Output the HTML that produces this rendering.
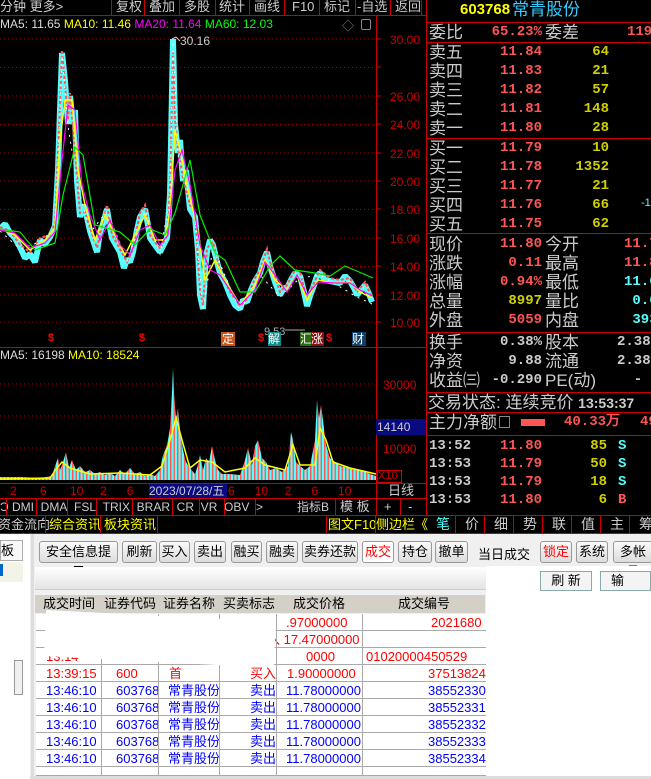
<!DOCTYPE html>
<html><head><meta charset="utf-8"><style>
*{margin:0;padding:0;box-sizing:border-box}
body{width:651px;height:779px;background:#000;position:relative;overflow:hidden;font-family:"Liberation Sans","WenQuanYi Zen Hei","Noto Sans CJK SC",sans-serif;}
.a{position:absolute;white-space:nowrap}
.rl{position:absolute;background:#c00}
.t{font-size:13px;color:#ccc;line-height:16px}
.lb{font-size:17px;color:#ccc;line-height:19px}
.n{font-size:14px;font-weight:bold;line-height:19px;text-align:right;font-family:"Liberation Mono","WenQuanYi Zen Hei",monospace}
.r{color:#ff5555}.y{color:#d0d000}.c{color:#55ffff}.w{color:#ccc}
.btn{position:absolute;top:541px;height:22px;border:1px solid #999;border-radius:3px;background:linear-gradient(#fafafa,#dcdcdc);font-size:13px;line-height:20px;text-align:center;color:#000}
.row{position:absolute;left:36px;width:450px;height:17px;border-bottom:1px solid #aaa;font-size:13px;line-height:17px;background:#fff}
.row span{position:absolute;top:0}
</style></head><body>
<div class="a t" style="left:0;top:-1px;color:#ccc">分钟 更多&gt;</div>
<div class="rl" style="left:0;top:15px;width:426px;height:1px"></div>
<div class="rl" style="left:111px;top:0;width:1px;height:15px"></div>
<div class="rl" style="left:144px;top:0;width:1px;height:15px"></div>
<div class="rl" style="left:179px;top:0;width:1px;height:15px"></div>
<div class="rl" style="left:215px;top:0;width:1px;height:15px"></div>
<div class="rl" style="left:249px;top:0;width:1px;height:15px"></div>
<div class="rl" style="left:284px;top:0;width:1px;height:15px"></div>
<div class="rl" style="left:319px;top:0;width:1px;height:15px"></div>
<div class="rl" style="left:355px;top:0;width:1px;height:15px"></div>
<div class="rl" style="left:390px;top:0;width:1px;height:15px"></div>
<div class="rl" style="left:421px;top:0;width:1px;height:15px"></div>
<div class="a t" style="left:116px;top:-1px">复权</div>
<div class="a t" style="left:149px;top:-1px">叠加</div>
<div class="a t" style="left:184px;top:-1px">多股</div>
<div class="a t" style="left:219px;top:-1px">统计</div>
<div class="a t" style="left:254px;top:-1px">画线</div>
<div class="a t" style="left:292px;top:-1px">F10</div>
<div class="a t" style="left:324px;top:-1px">标记</div>
<div class="a t" style="left:357px;top:-1px">-自选</div>
<div class="a t" style="left:395px;top:-1px">返回</div>
<div class="a" style="left:0;top:16px;font-size:12px;line-height:16px"><span style="color:#ddd">MA5: 11.65 </span><span style="color:#ff0">MA10: 11.46 </span><span style="color:#f0f">MA20: 11.64 </span><span style="color:#0f0">MA60: 12.03</span></div>
<div class="a" style="left:342px;top:17px;color:#888;font-size:12px">◇</div>
<div class="a" style="left:361px;top:19px;width:10px;height:11px;border:1px solid #888;border-radius:2px"></div>
<div class="rl" style="left:376px;top:16px;width:1px;height:482px"></div>
<div class="rl" style="left:426px;top:0;width:1px;height:516px"></div>
<div class="rl" style="left:0;top:347px;width:426px;height:1px"></div>
<svg class="a" style="left:0;top:16px" width="426" height="470" viewBox="0 16 426 470">
<defs>
<pattern id="vp" width="7" height="10" patternUnits="userSpaceOnUse">
<rect x="0" y="0" width="2" height="10" fill="#55ffff"/><rect x="2" y="0" width="1.5" height="10" fill="#ff5555"/><rect x="3.5" y="0" width="2" height="10" fill="#55ffff"/><rect x="5.5" y="0" width="1.5" height="10" fill="#ff6060"/>
</pattern>
</defs>
<g stroke="#a00" stroke-dasharray="1,3" stroke-width="1">
<line x1="0" y1="39" x2="376" y2="39"/><line x1="0" y1="67.5" x2="376" y2="67.5"/><line x1="0" y1="96" x2="376" y2="96"/><line x1="0" y1="124.5" x2="376" y2="124.5"/><line x1="0" y1="153" x2="376" y2="153"/><line x1="0" y1="181" x2="376" y2="181"/><line x1="0" y1="209.5" x2="376" y2="209.5"/><line x1="0" y1="238" x2="376" y2="238"/><line x1="0" y1="266.5" x2="376" y2="266.5"/><line x1="0" y1="295" x2="376" y2="295"/><line x1="0" y1="322" x2="376" y2="322"/>
<line x1="0" y1="384" x2="376" y2="384"/><line x1="0" y1="416" x2="376" y2="416"/><line x1="0" y1="448" x2="376" y2="448"/>
</g>
<g stroke="#c00"><line x1="376" y1="39" x2="381" y2="39"/><line x1="376" y1="67" x2="381" y2="67"/><line x1="376" y1="96" x2="381" y2="96"/><line x1="376" y1="124" x2="381" y2="124"/><line x1="376" y1="153" x2="381" y2="153"/><line x1="376" y1="181" x2="381" y2="181"/><line x1="376" y1="209" x2="381" y2="209"/><line x1="376" y1="238" x2="381" y2="238"/><line x1="376" y1="266" x2="381" y2="266"/><line x1="376" y1="295" x2="381" y2="295"/><line x1="376" y1="322" x2="381" y2="322"/></g>
<g fill="#c00" font-size="12" font-family="Liberation Sans">
<text x="390" y="44">30.00</text><text x="390" y="101">26.00</text><text x="390" y="129">24.00</text><text x="390" y="158">22.00</text><text x="390" y="186">20.00</text><text x="390" y="214">18.00</text><text x="390" y="243">16.00</text><text x="390" y="271">14.00</text><text x="390" y="300">12.00</text><text x="390" y="327">10.00</text>
<text x="383" y="389">30000</text><text x="383" y="453">10000</text>
</g>
<polyline fill="none" stroke="#55ffff" stroke-width="6" stroke-linejoin="bevel" points="0,229 5,224 10,233 15,238 20,247 25,258 30,254 35,262 40,240 45,244 50,237 55,226 58,170 60,110 62,53 65,81 68,124 70,96 73,124 75,110 77,181 80,217 83,205 85,209 88,222 90,231 93,240 97,252 100,232 103,224 107,209 110,228 112,238 116,245 120,252 124,268 127,259 130,262 133,252 137,230 140,217 145,209 148,225 150,238 155,245 160,252 164,244 167,238 170,195 173,39 175,124 178,153 180,140 183,181 186,170 190,209 195,217 198,250 200,295 203,309 205,270 207,252 210,240 213,245 217,262 220,273 225,282 230,295 235,305 240,309 243,300 247,302 251,290 255,281 260,273 263,262 267,252 270,266 275,282 280,295 284,288 287,288 291,280 295,273 300,276 304,292 307,306 310,296 313,288 317,276 320,273 325,280 330,281 335,282 340,283 345,276 350,281 354,288 357,295 361,290 365,285 369,294 372,302"/>
<polyline fill="none" stroke="#ff5555" stroke-width="2" stroke-dasharray="3,2" points="0,227 10,231 20,245 30,252 40,238 50,235 55,223 60,105 62,50 65,84 68,120 70,93 73,128 77,178 80,213 85,212 90,228 97,248 103,221 107,205 112,235 120,249 127,262 133,249 140,213 145,205 150,235 160,249 167,235 170,190 173,50 175,120 178,150 183,178 190,205 195,213 200,290 203,305 207,248 213,242 220,270 230,292 240,306 247,299 255,278 260,270 267,249 270,262 280,292 287,285 295,270 300,272 307,300 313,285 320,270 330,278 340,280 350,278 357,292 365,282 372,298"/>
<polyline fill="none" stroke="#ffffff" stroke-width="1" stroke-dasharray="2,5" points="0,231 20,249 40,242 55,228 60,112 62,55 68,126 77,183 90,233 107,211 127,261 145,211 160,254 170,197 173,41 178,155 195,219 203,311 213,247 240,311 260,275 280,297 300,278 320,275 357,297 372,304"/>
<polyline fill="none" stroke="#ffff00" stroke-width="1.5" points="0,229 15,235 30,250 45,240 55,228 60,140 65,100 72,100 78,170 85,205 95,240 105,215 115,235 125,255 135,235 145,215 155,240 165,240 170,210 175,130 180,150 188,190 198,230 205,280 215,260 225,280 240,305 255,285 265,260 275,280 287,290 297,275 307,300 318,280 335,283 350,282 360,292 372,298"/>
<polyline fill="none" stroke="#ff00ff" stroke-width="1.2" points="0,230 15,233 30,248 45,243 55,232 62,160 68,105 75,110 82,185 90,215 100,240 110,220 120,245 130,255 140,230 150,225 160,245 168,235 175,170 182,150 190,185 200,245 210,270 220,275 240,305 255,290 265,262 275,275 287,292 297,275 307,295 318,282 335,283 350,283 360,290 373,296"/>
<polyline fill="none" stroke="#00ee00" stroke-width="1.2" points="0,229 20,232 35,250 55,243 63,195 75,147 83,155 95,225 110,229 120,232 135,245 150,229 165,235 175,213 190,160 200,215 215,253 225,260 240,292 255,292 270,266 280,256 295,270 315,273 330,276 345,266 373,278"/>
<text x="180" y="45" fill="#ccc" font-size="12" font-family="Liberation Sans">30.16</text>
<polyline fill="none" stroke="#ccc" points="172,39 176,37 180,41"/>
<text x="264" y="335" fill="#aaa" font-size="11" font-family="Liberation Sans">9.53</text>
<line x1="285" y1="330" x2="305" y2="330" stroke="#aaa"/>
<polygon fill="url(#vp)" points="0,477 20,477 40,478 52,476 55,466 58,458 60,470 63,462 66,452 69,468 72,460 76,470 80,466 85,472 90,470 95,474 100,472 105,475 110,473 115,476 120,470 125,474 130,468 135,474 140,472 145,476 150,474 155,476 160,470 163,455 166,448 168,440 170,428 172,392 173,368 174,392 176,420 178,408 180,430 183,450 186,462 190,468 195,474 198,465 200,455 203,470 206,458 209,462 212,446 215,460 218,470 222,474 230,474 240,475 245,460 248,448 252,465 255,446 258,440 262,458 266,462 270,470 276,468 282,472 288,466 291,432 293,440 296,462 300,466 305,470 310,466 315,440 317,400 319,418 321,405 323,420 326,445 330,458 335,462 340,466 350,468 360,470 370,474 376,476 376,480 0,480"/>
<polyline fill="none" stroke="#ffff00" stroke-width="1.5" points="0,479 50,478 57,468 62,462 70,468 90,474 120,473 150,475 162,466 170,440 176,418 182,440 190,468 200,460 212,462 225,472 245,468 255,458 265,465 285,470 293,445 300,465 315,465 320,428 326,440 333,462 350,468 376,474"/>
</svg>
<div class="a" style="left:48px;top:332px;color:#f00;font-size:11px;font-weight:bold">$</div>
<div class="a" style="left:139px;top:332px;color:#f00;font-size:11px;font-weight:bold">$</div>
<div class="a" style="left:221px;top:332px;width:14px;height:14px;background:#c8561c;color:#fff;font-size:12px;line-height:14px;text-align:center">定</div>
<div class="a" style="left:258px;top:332px;color:#f00;font-size:11px;font-weight:bold">$</div>
<div class="a" style="left:268px;top:332px;width:13px;height:14px;background:#128a8a;color:#fff;font-size:12px;line-height:14px">解</div>
<div class="a" style="left:300px;top:332px;width:12px;height:14px;background:#2a6a10;color:#fff;font-size:12px;line-height:14px">汇</div>
<div class="a" style="left:311px;top:332px;width:13px;height:14px;background:#8a1010;color:#fff;font-size:12px;line-height:14px">涨</div>
<div class="a" style="left:326px;top:332px;color:#f00;font-size:11px;font-weight:bold">$</div>
<div class="a" style="left:352px;top:332px;width:14px;height:14px;background:#10406a;color:#fff;font-size:12px;line-height:14px">财</div>
<div class="a" style="left:0;top:348px;font-size:12px;line-height:15px"><span style="color:#ddd">MA5: 16198 </span><span style="color:#ff0">MA10: 18524</span></div>
<div class="a" style="left:376px;top:419px;width:50px;height:16px;background:#0a0a80;color:#ccc;font-size:12px;line-height:16px;padding-left:1px">14140</div>
<div class="a" style="left:377px;top:470px;width:25px;height:13px;border:1px solid #c00;color:#c00;font-size:11px;line-height:11px">X10</div>
<div class="rl" style="left:0;top:483px;width:426px;height:1px"></div>
<div class="rl" style="left:0;top:498px;width:426px;height:1px"></div>
<div class="rl" style="left:0;top:515px;width:651px;height:1px"></div>
<div class="rl" style="left:0;top:533px;width:651px;height:1px"></div>
<div class="a" style="left:0;top:484px;font-size:12px;line-height:14px;color:#c00">&nbsp;&nbsp;&nbsp;2&nbsp;&nbsp;&nbsp;&nbsp;&nbsp;&nbsp;&nbsp;6&nbsp;&nbsp;&nbsp;&nbsp;&nbsp;&nbsp;&nbsp;10&nbsp;&nbsp;&nbsp;&nbsp;&nbsp;2&nbsp;&nbsp;&nbsp;&nbsp;&nbsp;&nbsp;6</div>
<div class="a" style="left:149px;top:484px;width:78px;height:14px;background:#0a0a80;color:#ccc;font-size:12px;line-height:14px">2023/07/28/五</div>
<div class="a" style="left:228px;top:484px;font-size:12px;line-height:14px;color:#c00">6&nbsp;&nbsp;&nbsp;&nbsp;&nbsp;&nbsp;10&nbsp;&nbsp;&nbsp;&nbsp;&nbsp;2&nbsp;&nbsp;&nbsp;&nbsp;&nbsp;&nbsp;6&nbsp;&nbsp;&nbsp;&nbsp;&nbsp;&nbsp;10</div>
<div class="a t" style="left:388px;top:483px">日线</div>
<div class="a t" style="left:0;top:499px;color:#ccc;font-size:12px">Ͻ&nbsp;DMI&nbsp;&nbsp;DMA&nbsp;&nbsp;FSL&nbsp;&nbsp;TRIX&nbsp;&nbsp;BRAR&nbsp;&nbsp;CR&nbsp;&nbsp;VR&nbsp;&nbsp;OBV&nbsp;&nbsp;&gt;</div>
<div class="rl" style="left:6px;top:499px;width:1px;height:16px"></div><div class="rl" style="left:36px;top:499px;width:1px;height:16px"></div><div class="rl" style="left:67px;top:499px;width:1px;height:16px"></div><div class="rl" style="left:96px;top:499px;width:1px;height:16px"></div><div class="rl" style="left:132px;top:499px;width:1px;height:16px"></div><div class="rl" style="left:172px;top:499px;width:1px;height:16px"></div><div class="rl" style="left:199px;top:499px;width:1px;height:16px"></div><div class="rl" style="left:224px;top:499px;width:1px;height:16px"></div><div class="rl" style="left:255px;top:499px;width:1px;height:16px"></div><div class="rl" style="left:335px;top:499px;width:1px;height:16px"></div><div class="rl" style="left:376px;top:499px;width:1px;height:16px"></div><div class="rl" style="left:400px;top:499px;width:1px;height:16px"></div>
<div class="a t" style="left:297px;top:499px;font-size:12px">指标B</div>
<div class="a t" style="left:340px;top:499px">模 板</div>
<div class="a t" style="left:384px;top:499px">+</div>
<div class="a t" style="left:408px;top:499px">-</div>
<div class="a t" style="left:-2px;top:517px;color:#ccc">资金流向</div>
<div class="a t" style="left:49px;top:517px;color:#ff0">综合资讯</div>
<div class="a t" style="left:104px;top:517px;color:#ff0">板块资讯</div>
<div class="a t" style="left:328px;top:517px;color:#ff0">图文F10</div>
<div class="a t" style="left:376px;top:517px;color:#ff0">侧边栏《</div>
<div class="rl" style="left:45px;top:516px;width:1px;height:17px"></div><div class="rl" style="left:100px;top:516px;width:1px;height:17px"></div><div class="rl" style="left:157px;top:516px;width:1px;height:17px"></div><div class="rl" style="left:326px;top:516px;width:1px;height:17px"></div><div class="rl" style="left:375px;top:516px;width:1px;height:17px"></div>
<div class="a" style="left:427px;top:516px;font-size:14px;line-height:17px;color:#ccc">
<span style="position:absolute;left:9px;color:#55ffff">笔</span><span style="position:absolute;left:38px">价</span><span style="position:absolute;left:67px">细</span><span style="position:absolute;left:96px">势</span><span style="position:absolute;left:125px">联</span><span style="position:absolute;left:154px">值</span><span style="position:absolute;left:183px">主</span><span style="position:absolute;left:212px">筹</span></div>
<div class="rl" style="left:455px;top:516px;width:1px;height:17px"></div><div class="rl" style="left:484px;top:516px;width:1px;height:17px"></div><div class="rl" style="left:513px;top:516px;width:1px;height:17px"></div><div class="rl" style="left:542px;top:516px;width:1px;height:17px"></div><div class="rl" style="left:571px;top:516px;width:1px;height:17px"></div><div class="rl" style="left:600px;top:516px;width:1px;height:17px"></div><div class="rl" style="left:629px;top:516px;width:1px;height:17px"></div>
<div class="a" style="left:460px;top:1px;font-size:15px;font-weight:bold;color:#ff0;line-height:18px">603768</div>
<div class="a" style="left:512px;top:0;font-size:17px;color:#33ccff;line-height:20px">常青股份</div>
<div class="rl" style="left:427px;top:22px;width:224px;height:1px"></div>
<div class="a lb" style="left:429px;top:23px">委比</div>
<div class="a n r" style="left:460px;top:23px;width:82px">65.23%</div>
<div class="a lb" style="left:545px;top:23px">委差</div>
<div class="a n r" style="left:600px;top:23px;width:60px;text-align:left;padding-left:27px">119</div>
<div class="rl" style="left:427px;top:42px;width:224px;height:1px"></div>
<div class="a" style="left:429px;top:43px">
<div class="lb">卖五</div><div class="lb">卖四</div><div class="lb">卖三</div><div class="lb">卖二</div><div class="lb">卖一</div></div>
<div class="a n r" style="left:470px;top:43px;width:72px">11.84<br>11.83<br>11.82<br>11.81<br>11.80</div>
<div class="a n y" style="left:560px;top:43px;width:49px">64<br>21<br>57<br>148<br>28</div>
<div class="rl" style="left:427px;top:138px;width:224px;height:1px"></div>
<div class="a" style="left:429px;top:139px">
<div class="lb">买一</div><div class="lb">买二</div><div class="lb">买三</div><div class="lb">买四</div><div class="lb">买五</div></div>
<div class="a n r" style="left:470px;top:139px;width:72px">11.79<br>11.78<br>11.77<br>11.76<br>11.75</div>
<div class="a n y" style="left:560px;top:139px;width:49px">10<br>1352<br>21<br>66<br>62</div>
<div class="a c" style="left:641px;top:197px;font-size:11px">-1</div>
<div class="rl" style="left:427px;top:233px;width:224px;height:1px"></div>
<div class="a" style="left:429px;top:235px">
<div class="lb">现价</div><div class="lb">涨跌</div><div class="lb">涨幅</div><div class="lb">总量</div><div class="lb">外盘</div></div>
<div class="a" style="left:470px;top:235px;width:72px"><div class="n r">11.80</div><div class="n r">0.11</div><div class="n r">0.94%</div><div class="n y">8997</div><div class="n r">5059</div></div>
<div class="a" style="left:545px;top:235px">
<div class="lb">今开</div><div class="lb">最高</div><div class="lb">最低</div><div class="lb">量比</div><div class="lb">内盘</div></div>
<div class="a" style="left:624px;top:235px"><div class="n r" style="text-align:left">11.7</div><div class="n r" style="text-align:left">11.8</div><div class="n c" style="text-align:left">11.6</div><div class="n c" style="text-align:left">&nbsp;0.6</div><div class="n c" style="text-align:left">&nbsp;393</div></div>
<div class="rl" style="left:427px;top:332px;width:224px;height:1px"></div>
<div class="a" style="left:429px;top:333px">
<div class="lb">换手</div><div class="lb">净资</div><div class="lb">收益㈢</div></div>
<div class="a" style="left:460px;top:333px;width:82px"><div class="n w">0.38%</div><div class="n w">9.88</div><div class="n w">-0.290</div></div>
<div class="a" style="left:545px;top:333px">
<div class="lb">股本</div><div class="lb">流通</div><div class="lb">PE(动)</div></div>
<div class="a" style="left:617px;top:333px"><div class="n w" style="text-align:left">2.38亿</div><div class="n w" style="text-align:left">2.38亿</div><div class="n w" style="text-align:left">&nbsp;&nbsp;-</div></div>
<div class="rl" style="left:427px;top:392px;width:224px;height:1px"></div>
<div class="a lb" style="left:428px;top:393px">交易状态: 连续竞价 <span style="font-size:14px;font-weight:bold">13:53:37</span></div>
<div class="rl" style="left:427px;top:412px;width:224px;height:1px"></div>
<div class="a lb" style="left:429px;top:413px">主力净额</div>
<div class="a" style="left:499px;top:416px;width:11px;height:12px;border:1px solid #888"></div>
<div class="a" style="left:521px;top:419px;width:24px;height:7px;background:#ff5555"></div>
<div class="a n r" style="left:560px;top:413px;width:60px">40.33万</div>
<div class="a n r" style="left:640px;top:413px;text-align:left">49</div>
<div class="rl" style="left:427px;top:435px;width:224px;height:1px"></div>
<div class="a" style="left:429px;top:437px"><div class="n w" style="text-align:left;line-height:18px">13:52<br>13:53<br>13:53<br>13:53</div></div>
<div class="a n r" style="left:490px;top:437px;width:52px;line-height:18px">11.80<br>11.79<br>11.79<br>11.80</div>
<div class="a n y" style="left:570px;top:437px;width:37px;line-height:18px">85<br>50<br>18<br>6</div>
<div class="a n" style="left:618px;top:437px;text-align:left;line-height:18px"><span class="c">S</span><br><span class="c">S</span><br><span class="c">S</span><br><span class="r">B</span></div>
<div class="a" style="left:0;top:534px;width:651px;height:245px;background:#f0f0f0"></div>
<div class="a" style="left:0;top:534px;width:30px;height:245px;background:#fff"></div>
<div class="a" style="left:0;top:540px;width:23px;height:21px;border:1px solid #aaa;background:#f8f8f8;font-size:13px;line-height:19px">板</div>
<div class="a" style="left:0;top:562px;width:23px;height:20px;background:#f3f3e8"></div>
<div class="a" style="left:0;top:564px;width:3px;height:12px;background:#06c"></div>
<div class="a" style="left:14px;top:660px;width:9px;height:35px;border:1px solid #999;background:#f0f0f0"></div>
<div class="a" style="left:31px;top:534px;width:3px;height:245px;background:#ddd"></div>
<div class="btn" style="left:39px;width:79px">安全信息提示</div>
<div class="btn" style="left:122px;width:35px">刷新</div>
<div class="btn" style="left:159px;width:31px">买入</div>
<div class="btn" style="left:194px;width:32px">卖出</div>
<div class="btn" style="left:231px;width:31px">融买</div>
<div class="btn" style="left:266px;width:32px">融卖</div>
<div class="btn" style="left:302px;width:56px">卖券还款</div>
<div class="btn" style="left:362px;width:32px;color:#f00;background:#fff">成交</div>
<div class="btn" style="left:398px;width:34px">持仓</div>
<div class="btn" style="left:435px;width:33px">撤单</div>
<div class="a" style="left:478px;top:544px;font-size:13px">当日成交</div>
<div class="btn" style="left:540px;width:32px;color:#f00">锁定</div>
<div class="btn" style="left:576px;width:32px">系统</div>
<div class="btn" style="left:613px;width:40px">多帐号</div>
<div class="a" style="left:35px;top:567px;width:616px;height:23px;background:linear-gradient(#fff,#e4e4e4);border-bottom:1px solid #ccc"></div>
<div class="a" style="left:35px;top:595px;width:450px;height:18px;background:#d4d0c8;font-size:13px;line-height:18px;color:#000">
<span class="a" style="left:8px">成交时间</span><span class="a" style="left:69px">证券代码</span><span class="a" style="left:128px">证券名称</span><span class="a" style="left:188px">买卖标志</span><span class="a" style="left:258px">成交价格</span><span class="a" style="left:363px">成交编号</span></div>
<div class="a" style="left:36px;top:614px;width:450px;height:165px;background:#fff"></div>
<div class="row" style="top:614px;color:#f00"><span style="left:250px">.97000000</span><span style="left:395px">2021680</span></div>
<div class="row" style="top:631px;color:#f00"><span style="left:10px">1</span><span style="left:218px">买入 17.47000000</span></div>
<div class="row" style="top:648px;color:#f00"><span style="left:10px">13:14</span><span style="left:270px">0000</span><span style="left:330px">01020000450529</span></div>
<div class="row" style="top:665px;color:#f00"><span style="left:10px">13:39:15</span><span style="left:80px">600</span><span style="left:133px">首</span><span style="left:214px">买入</span><span style="left:251px">1.90000000</span><span style="left:392px">37513824</span></div>
<div class="row" style="top:682px;color:#00f"><span style="left:10px">13:46:10</span><span style="left:80px">603768</span><span style="left:132px">常青股份</span><span style="left:214px">卖出</span><span style="left:250px">11.78000000</span><span style="left:392px">38552330</span></div>
<div class="row" style="top:699px;color:#00f"><span style="left:10px">13:46:10</span><span style="left:80px">603768</span><span style="left:132px">常青股份</span><span style="left:214px">卖出</span><span style="left:250px">11.78000000</span><span style="left:392px">38552331</span></div>
<div class="row" style="top:716px;color:#00f"><span style="left:10px">13:46:10</span><span style="left:80px">603768</span><span style="left:132px">常青股份</span><span style="left:214px">卖出</span><span style="left:250px">11.78000000</span><span style="left:392px">38552332</span></div>
<div class="row" style="top:733px;color:#00f"><span style="left:10px">13:46:10</span><span style="left:80px">603768</span><span style="left:132px">常青股份</span><span style="left:214px">卖出</span><span style="left:250px">11.78000000</span><span style="left:392px">38552333</span></div>
<div class="row" style="top:750px;color:#00f"><span style="left:10px">13:46:10</span><span style="left:80px">603768</span><span style="left:132px">常青股份</span><span style="left:214px">卖出</span><span style="left:250px">11.78000000</span><span style="left:392px">38552334</span></div>
<div class="row" style="top:767px;color:#00f;height:9px;overflow:hidden"></div>
<div class="a" style="left:101px;top:614px;width:1px;height:162px;background:#aaa"></div>
<div class="a" style="left:158px;top:614px;width:1px;height:162px;background:#aaa"></div>
<div class="a" style="left:219px;top:614px;width:1px;height:162px;background:#aaa"></div>
<div class="a" style="left:276px;top:614px;width:1px;height:162px;background:#aaa"></div>
<div class="a" style="left:362px;top:614px;width:1px;height:162px;background:#aaa"></div>
<div class="a" style="left:45px;top:616px;width:230px;height:46px;background:#fff;transform:rotate(3deg)"></div>
<div class="a" style="left:486px;top:566px;width:165px;height:213px;background:#fff"></div>
<div class="a" style="left:540px;top:571px;width:52px;height:20px;border:1px solid #8aa;background:#f4f4f4;font-size:13px;line-height:18px;text-align:center">刷 新</div>
<div class="a" style="left:600px;top:571px;width:51px;height:20px;border:1px solid #8aa;background:#f4f4f4;font-size:13px;line-height:18px;padding-left:10px">输</div>
<div class="a" style="left:30px;top:776px;width:621px;height:3px;background:#ddd"></div>
</body></html>
